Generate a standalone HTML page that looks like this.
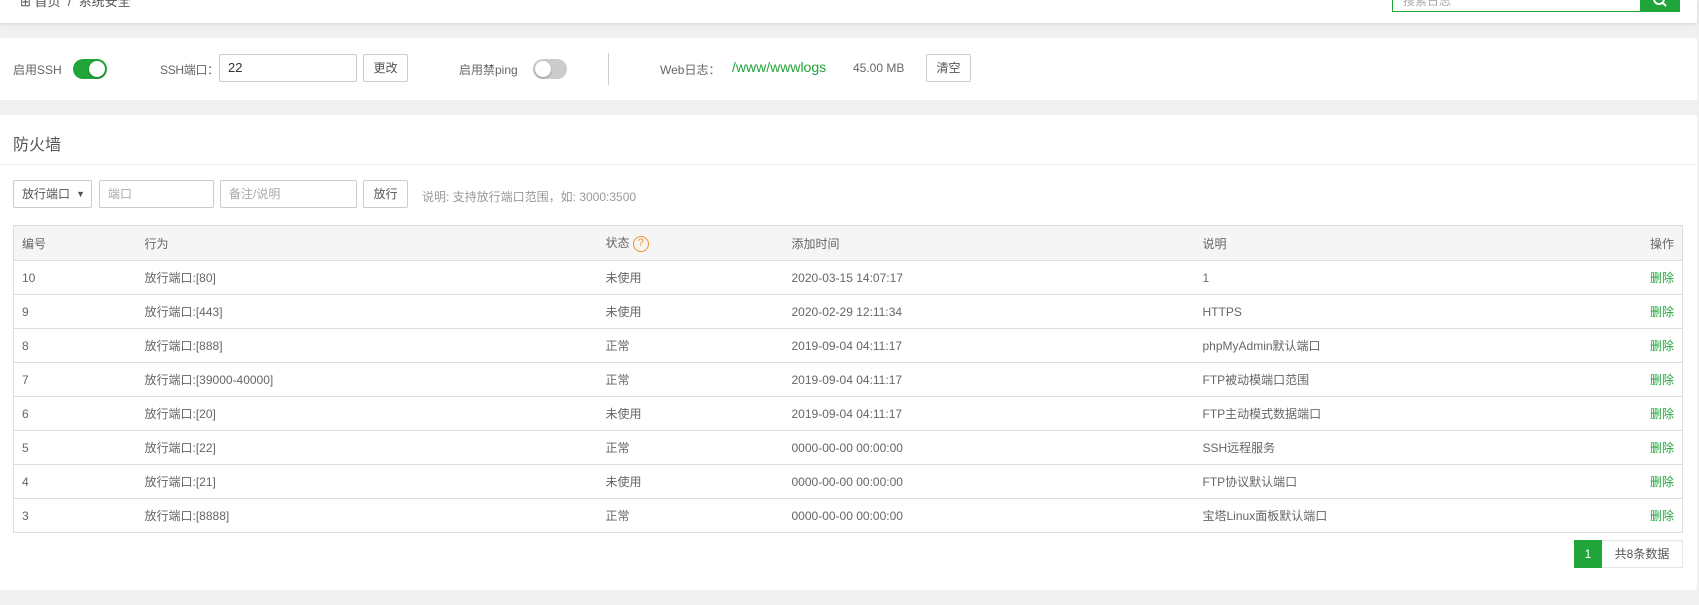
<!DOCTYPE html>
<html><head><meta charset="utf-8"><style>
*{box-sizing:border-box;margin:0;padding:0}
body{width:1699px;height:605px;background:#f0f0f0;font-family:"Liberation Sans","Noto Sans CJK SC",sans-serif;font-size:12px;color:#666;position:relative;overflow:hidden}
.abs{position:absolute}
.hdr{left:0;top:0;width:1697px;height:23px;background:#fff;box-shadow:0 1px 3px rgba(0,0,0,.12)}
.panel{background:#fff;left:0;width:1697px}
.inp{position:absolute;border:1px solid #ccc;border-radius:2px;background:#fff;height:28px;line-height:26px;padding-left:8px;color:#aaa;font-size:12px}
.btn{position:absolute;border:1px solid #ccc;border-radius:2px;background:#fff;height:28px;line-height:26px;text-align:center;color:#555;font-size:12px}
.tg{position:absolute;width:34px;height:20px;border-radius:10px}
.tg i{position:absolute;top:2px;width:16px;height:16px;border-radius:50%;background:#fff;box-shadow:0 1px 2px rgba(0,0,0,.3)}
.t{position:absolute;white-space:nowrap}
table{position:absolute;left:13px;top:225px;width:1670px;border-collapse:collapse;table-layout:fixed;border:1px solid #ddd}
th,td{text-align:left;font-weight:normal;height:34px;border-bottom:1px solid #ddd;padding:0;white-space:nowrap;color:#666}
th{background:#f5f5f5;height:35px;color:#666}
td.op,th.op{text-align:right;padding-right:8px}
td.op{color:#20a53a}
</style></head><body>
<div class="abs hdr">
 <div class="t" style="left:20px;top:-9px;color:#555;font-size:13px">⊞ 首页 &nbsp;/&nbsp; 系统安全</div>
 <div class="abs" style="left:1392px;top:-2px;width:249px;height:14px;border:1px solid #20a53a;border-top:none;background:#fff;color:#aaa;font-size:12px;padding-left:10px;line-height:6px;overflow:hidden">搜索日志</div>
 <div class="abs" style="left:1641px;top:-2px;width:39px;height:14px;background:#20a53a">
  <svg width="39" height="14" style="position:absolute;left:0;top:0"><circle cx="18" cy="1" r="5" stroke="#fff" stroke-width="2" fill="none"/><line x1="22" y1="5" x2="25" y2="8" stroke="#fff" stroke-width="2"/></svg>
 </div>
</div>
<div class="abs panel" style="top:38px;height:62px"></div>
<div class="t" style="left:13px;top:61px">启用SSH</div>
<div class="tg" style="left:73px;top:59px;background:#20a53a"><i style="left:16px"></i></div>
<div class="t" style="left:160px;top:61px;letter-spacing:-0.3px">SSH端口：</div>
<div class="inp" style="left:219px;top:54px;width:138px;color:#333;font-size:13px">22</div>
<div class="btn" style="left:363px;top:54px;width:45px">更改</div>
<div class="t" style="left:459px;top:61px">启用禁ping</div>
<div class="tg" style="left:533px;top:59px;background:#ccc"><i style="left:2px"></i></div>
<div class="abs" style="left:608px;top:53px;width:1px;height:32px;background:#ccc"></div>
<div class="t" style="left:660px;top:61px">Web日志：</div>
<div class="t" style="left:732px;top:59px;color:#20a53a;font-size:14px">/www/wwwlogs</div>
<div class="t" style="left:853px;top:61px">45.00 MB</div>
<div class="btn" style="left:926px;top:54px;width:45px">清空</div>

<div class="abs panel" style="top:115px;height:475px"></div>
<div class="t" style="left:13px;top:131px;font-size:16px;color:#555">防火墙</div>
<div class="abs" style="left:0;top:164px;width:1697px;height:1px;background:#eee"></div>
<div class="inp" style="left:13px;top:180px;width:79px;color:#555">放行端口 <span style="position:absolute;right:6px;font-size:9px">▼</span></div>
<div class="inp" style="left:99px;top:180px;width:115px">端口</div>
<div class="inp" style="left:220px;top:180px;width:137px">备注/说明</div>
<div class="btn" style="left:363px;top:180px;width:45px">放行</div>
<div class="t" style="left:422px;top:188px;color:#999">说明: 支持放行端口范围，如: 3000:3500</div>

<table>
<colgroup><col style="width:131px"><col style="width:461px"><col style="width:186px"><col style="width:411px"><col style="width:380px"><col></colgroup>
<tr><th style="padding-left:8px">编号</th><th>行为</th><th>状态 <span style="display:inline-block;width:16px;height:16px;border:1.5px solid #f0932b;border-radius:50%;color:#f0932b;text-align:center;line-height:13px;font-size:11px;vertical-align:middle">?</span></th><th>添加时间</th><th>说明</th><th class="op">操作</th></tr>
<tr><td style="padding-left:8px">10</td><td>放行端口:[80]</td><td>未使用</td><td>2020-03-15 14:07:17</td><td>1</td><td class="op">删除</td></tr>
<tr><td style="padding-left:8px">9</td><td>放行端口:[443]</td><td>未使用</td><td>2020-02-29 12:11:34</td><td>HTTPS</td><td class="op">删除</td></tr>
<tr><td style="padding-left:8px">8</td><td>放行端口:[888]</td><td>正常</td><td>2019-09-04 04:11:17</td><td>phpMyAdmin默认端口</td><td class="op">删除</td></tr>
<tr><td style="padding-left:8px">7</td><td>放行端口:[39000-40000]</td><td>正常</td><td>2019-09-04 04:11:17</td><td>FTP被动模端口范围</td><td class="op">删除</td></tr>
<tr><td style="padding-left:8px">6</td><td>放行端口:[20]</td><td>未使用</td><td>2019-09-04 04:11:17</td><td>FTP主动模式数据端口</td><td class="op">删除</td></tr>
<tr><td style="padding-left:8px">5</td><td>放行端口:[22]</td><td>正常</td><td>0000-00-00 00:00:00</td><td>SSH远程服务</td><td class="op">删除</td></tr>
<tr><td style="padding-left:8px">4</td><td>放行端口:[21]</td><td>未使用</td><td>0000-00-00 00:00:00</td><td>FTP协议默认端口</td><td class="op">删除</td></tr>
<tr><td style="padding-left:8px">3</td><td>放行端口:[8888]</td><td>正常</td><td>0000-00-00 00:00:00</td><td>宝塔Linux面板默认端口</td><td class="op">删除</td></tr>
</table>
<div class="abs" style="left:1574px;top:540px;width:28px;height:28px;background:#20a53a;color:#fff;text-align:center;line-height:28px">1</div>
<div class="abs" style="left:1602px;top:540px;width:81px;height:28px;border:1px solid #e6e6e6;border-left:none;color:#555;text-align:center;line-height:26px;font-size:12px">共8条数据</div>
</body></html>
